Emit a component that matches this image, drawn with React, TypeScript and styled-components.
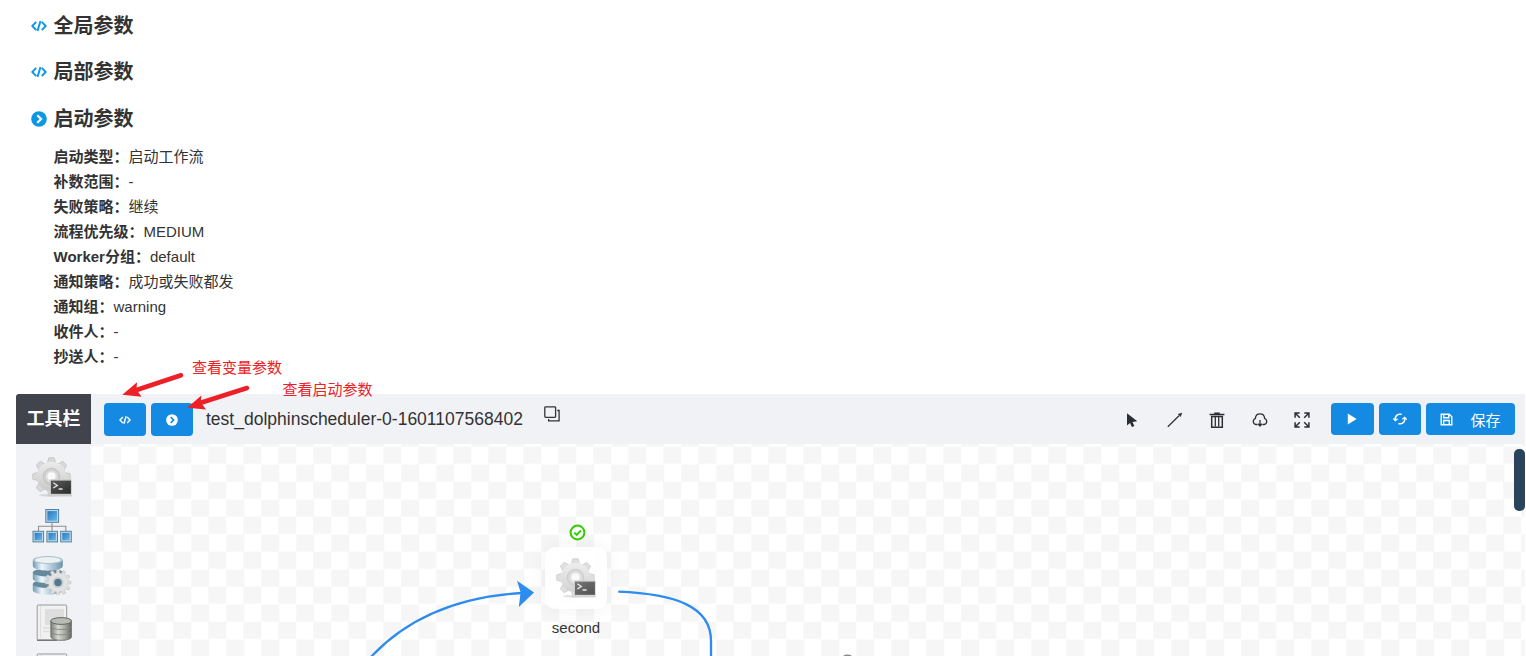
import React from 'react';
import styled, { createGlobalStyle } from 'styled-components';

const GlobalStyle = createGlobalStyle`
  * { box-sizing: border-box; }
  html, body { margin: 0; padding: 0; background: #fff; overflow: hidden; }
  body {
    font-family: "Liberation Sans", Arial, "Noto Sans CJK SC", sans-serif;
    color: #333;
    font-size: 15px;
  }
  svg { display: block; flex: none; }
`;

const Page = styled.div`
  position: relative;
  width: 1526px;
  height: 656px;
  overflow: hidden;
  display: flex;
  flex-direction: column;
`;

const Params = styled.section`
  height: 394px;
  flex: none;
  padding: 11px 0 0 30.5px;
`;

const Heading = styled.h2<{ $gap: number }>`
  display: flex;
  align-items: center;
  gap: 7px;
  height: 30px;
  margin: 0 0 ${(p) => p.$gap}px;
  font-size: 20px;
  line-height: 30px;
  font-weight: 700;
  color: #333;
`;

const ParamList = styled.ul`
  list-style: none;
  margin: 0;
  padding: 0 0 0 23px;
`;

const ParamRow = styled.li`
  height: 25px;
  line-height: 25px;
  white-space: nowrap;
`;

const Dag = styled.section`
  display: flex;
  flex-direction: column;
  width: 1509px;
  height: 262px;
  margin-left: 16px;
`;

const Toolbar = styled.header`
  display: flex;
  height: 50px;
  flex: none;
  background: #f1f2f6;
  border-radius: 3px 0 0 0;
  overflow: hidden;
`;

const ToolTitle = styled.div`
  width: 75px;
  background: #41444d;
  color: #fff;
  font-size: 18px;
  font-weight: 700;
  line-height: 51px;
  text-align: center;
`;

const LeftTools = styled.div`
  display: flex;
  align-items: flex-start;
  gap: 5px;
  padding: 9px 0 0 13px;
`;

const Button = styled.button<{ $w: number; $h?: number }>`
  display: flex;
  align-items: center;
  justify-content: center;
  width: ${(p) => p.$w}px;
  height: ${(p) => p.$h ?? 32}px;
  padding: 0;
  border: 0;
  border-radius: 4px;
  background: #158ae2;
  color: #fff;
  font: inherit;
  gap: 17px;
`;

const ProcessName = styled.span`
  margin-left: 8px;
  font-size: 17.5px;
  line-height: 32px;
`;

const CopyIcon = styled.span`
  margin: 2.5px 0 0 16.5px;
`;

const RightTools = styled.div`
  display: flex;
  align-items: flex-start;
  margin-left: auto;
  padding: 9px 10px 0 0;
  gap: 5px;
`;

const IconStrip = styled.div`
  display: flex;
  margin-right: 2.5px;
`;

const IconSlot = styled.span`
  display: flex;
  align-items: center;
  justify-content: center;
  width: 42.5px;
  height: 34px;
`;

const Body = styled.div`
  display: flex;
  flex: 1;
  min-height: 0;
`;

const Palette = styled.aside`
  display: flex;
  flex-direction: column;
  align-items: center;
  gap: 8.8px;
  width: 75px;
  flex: none;
  padding: 13px 3px 0 0;
  background: #f1f2f6;
  overflow: hidden;
`;

const Canvas = styled.div`
  position: relative;
  flex: 1;
  overflow: hidden;
  background: repeating-conic-gradient(#f6f6f6 0 25%, #fff 0 50%) -4.8px 2.7px / 35px 35px;
`;

const Links = styled.svg`
  position: absolute;
  left: 0;
  top: 0;
`;

const Scrollbar = styled.div`
  position: absolute;
  right: 0;
  top: 5px;
  width: 11px;
  height: 62px;
  border-radius: 5px;
  background: #2a455b;
`;

const Node = styled.div`
  position: absolute;
  left: 454px;
  top: 80px;
  width: 62px;
  display: flex;
  flex-direction: column;
  align-items: center;
`;

const NodeStatus = styled.div`
  padding-left: 2px;
`;

const NodeCard = styled.div`
  display: flex;
  align-items: center;
  justify-content: center;
  width: 62px;
  height: 62px;
  margin-top: 6px;
  border-radius: 10px;
  background: rgba(255, 255, 255, 0.9);
  box-shadow: 0 0 18px rgba(0, 0, 0, 0.06);
`;

const NodeLabel = styled.span`
  margin-top: 9px;
  line-height: 20px;
`;

const NextStatus = styled.div`
  position: absolute;
  left: 748px;
  top: 210px;
`;

const Notes = styled.svg`
  position: absolute;
  left: 0;
  top: 350px;
`;

const Note = styled.span<{ $x: number; $y: number }>`
  position: absolute;
  left: ${(p) => p.$x}px;
  top: ${(p) => p.$y}px;
  line-height: 20px;
  color: #ee2027;
  white-space: nowrap;
`;

const CodeIcon = ({ size, color }: { size: number; color: string }) => (
  <svg width={size} height={size} viewBox="0 0 16 16" fill="none" stroke={color} strokeWidth="1.9">
    <path d="M5.2 3.9 1.3 8l3.9 4.1M10.800 3.900 14.700 8l-3.900 4.100M9.500 3.100 6.500 12.900" />
  </svg>
);

const ChevronCircle = ({ size, bg, fg }: { size: number; bg: string; fg: string }) => (
  <svg width={size} height={size} viewBox="0 0 16 16">
    <circle cx="8" cy="8" r="7.8" fill={bg} />
    <path d="M6.3 4.2 10.1 8l-3.8 3.8" fill="none" stroke={fg} strokeWidth="2.2" />
  </svg>
);

const StatusIcon = ({ color }: { color: string }) => (
  <svg width="17" height="17" viewBox="0 0 17 17" fill="none" stroke={color} strokeWidth="2">
    <circle cx="8.5" cy="8.5" r="6.9" />
    <path d="m5.3 8.6 2.4 2.3 4.2-4.4" />
  </svg>
);

const teeth = [0, 45, 90, 135, 180, 225, 270, 315];

const ShellIcon = ({ id, faded }: { id: string; faded?: boolean }) => (
  <svg width="40" height="40" viewBox="0 0 40 40" opacity={faded ? 0.82 : 1}>
    <defs>
      <linearGradient id={`${id}g`} x1="0" y1="0" x2="0" y2="1">
        <stop offset="0" stopColor="#ebebeb" />
        <stop offset="1" stopColor="#c9c9c9" />
      </linearGradient>
      <linearGradient id={`${id}t`} x1="0" y1="0" x2="1" y2="1">
        <stop offset="0" stopColor="#5a5a5a" />
        <stop offset="1" stopColor="#2a2a2a" />
      </linearGradient>
    </defs>
    <ellipse cx="17" cy="38.3" rx="10" ry="1.4" fill="#c4c4c4" opacity=".6" />
    <g fill="#d9d9d9" stroke="#bdbdbd" strokeWidth=".7">
      {teeth.map((a) => (
        <path key={a} d="M15 7.500 16.800.800h5.400l1.800 6.700z" transform={`rotate(${a} 19.5 19.5)`} />
      ))}
    </g>
    <circle cx="19.5" cy="19.5" r="14.8" fill={`url(#${id}g)`} />
    <circle cx="19.5" cy="19.5" r="8.3" fill="#cfcfcf" stroke="#bdbdbd" strokeWidth=".8" />
    <circle cx="19.5" cy="19.5" r="6" fill="#dedede" />
    <circle cx="19.5" cy="19.3" r="4" fill="#fafafa" />
    <rect x="18" y="22.2" width="21.8" height="17.4" rx=".8" fill="#cdcdcd" />
    <rect x="18.9" y="23.6" width="20" height="13.2" fill={`url(#${id}t)`} />
    <path d="m21.3 25.8 4 2.6-4 2.6M26.6 32h4" fill="none" stroke="#e2e2e2" strokeWidth="1.3" />
  </svg>
);

const SubProcessIcon = () => (
  <svg width="40" height="40" viewBox="0 0 40 40">
    <defs>
      <linearGradient id="blue" x1="0" y1="0" x2="1" y2="1">
        <stop offset="0" stopColor="#2a78b8" />
        <stop offset="1" stopColor="#69b7ec" />
      </linearGradient>
    </defs>
    <path d="M20 17v9M6.5 25v-4.7h27.3V25" fill="none" stroke="#8f8f8f" strokeWidth="1.1" />
    {[
      [13.3, 3, 13.8],
      [0.5, 24.800, 11.600],
      [14.4, 24.800, 11.600],
      [28.2, 24.800, 11.600],
    ].map(([x, y, s]) => (
      <g key={x}>
        <rect x={x + 0.5} y={y + 0.5} width={s - 1} height={s - 1} fill="#b9d8ea" stroke="#55839f" strokeWidth="1" />
        <rect x={x + 2.1} y={y + 2.1} width={s - 4.2} height={s - 4.2} fill="url(#blue)" />
      </g>
    ))}
  </svg>
);

const ProcedureIcon = () => (
  <svg width="40" height="40" viewBox="0 0 40 40">
    <defs>
      <linearGradient id="drum" x1="0" x2="1">
        <stop offset="0" stopColor="#6f9ab2" />
        <stop offset=".3" stopColor="#eef6fa" />
        <stop offset=".65" stopColor="#a9c5d5" />
        <stop offset="1" stopColor="#6c94ab" />
      </linearGradient>
    </defs>
    {[29, 17.500, 5].map((y) => (
      <g key={y}>
        <path d={`M.8 ${y}v6c0 6.200 30 6.200 30 0V${y}z`} fill="url(#drum)" />
        <ellipse cx="15.8" cy={y} rx="15" ry="4" fill={y < 6 ? '#a9c3d1' : '#66889c'} />
      </g>
    ))}
    <ellipse cx="15.8" cy="5" rx="12.800" ry="3" fill="#eef1f2" />
    <g fill="#dcdcdc" stroke="#b5b5b5" strokeWidth=".4">
      {[0, 30, 60, 90, 120, 150, 180, 210, 240, 270, 300, 330].map((a) => (
        <path key={a} d="m23.900 19.500.800-5h2.600l.800 5z" transform={`rotate(${a} 26 27.5)`} />
      ))}
    </g>
    <circle cx="26" cy="27.5" r="9.5" fill="#e3e3e3" />
    <circle cx="26" cy="27.5" r="5.6" fill="#cbcfd1" />
    <circle cx="26" cy="27.5" r="3.7" fill="#54788d" />
  </svg>
);

const SqlIcon = ({ id }: { id: string }) => (
  <svg width="40" height="40" viewBox="0 0 40 40">
    <defs>
      <linearGradient id={id} x1="0" x2="1">
        <stop offset="0" stopColor="#777b74" />
        <stop offset=".35" stopColor="#d8dbd4" />
        <stop offset=".7" stopColor="#a3a69f" />
        <stop offset="1" stopColor="#5f625d" />
      </linearGradient>
    </defs>
    <rect x="5.2" y="2" width="29.500" height="35" rx="1" fill="#f1f1f1" stroke="#999" strokeWidth="1" />
    <path d="M5 37.300h20" stroke="#777" strokeWidth="1.4" />
    <path d="M8.4 3v32" stroke="#dcdcdc" />
    <rect x="13" y="6" width="19" height="16" fill="#dedede" />
    <path d="M11 25h9M11 28.5h7" stroke="#ddd" strokeWidth="1.5" />
    <path d="M18.8 18v15.7c0 4.8 20.8 4.8 20.8 0V18z" fill={`url(#${id})`} stroke="#70736e" strokeWidth=".8" />
    <path d="M18.8 23.5c1 4 19.8 4 20.8 0M18.8 28.8c1 4 19.8 4 20.8 0" fill="none" stroke="#858881" strokeWidth=".9" />
    <ellipse cx="29.2" cy="18" rx="10.4" ry="3.4" fill="#b9bcb5" stroke="#62655f" strokeWidth="1" />
  </svg>
);

const PointerIcon = () => (
  <svg width="16" height="16" viewBox="0 0 16 16" fill="#2b2f33">
    <path d="M3 1.2v12.300l3-2.600 1.900 4.200 2.500-1.200-1.900-4 4.800-.700z" />
  </svg>
);

const LineIcon = () => (
  <svg width="16" height="16" viewBox="0 0 16 16">
    <path d="M.8 14.8 12 3.7" stroke="#2b2f33" strokeWidth="1.2" />
    <path d="m15.200.7-1.500 4.400-2.900-3z" fill="#2b2f33" />
  </svg>
);

const TrashIcon = () => (
  <svg width="16" height="16" viewBox="0 0 16 16" fill="none" stroke="#2b2f33">
    <path d="M.6 2.600h14.8" strokeWidth="1.5" />
    <path d="M5.2 1.300h5.6" strokeWidth="1.4" />
    <path d="M2.7 4.5v10.7h10.6V4.5z" strokeWidth="1.5" />
    <path d="M6.3 5v9.5M9.7 5v9.5" strokeWidth="1.3" />
  </svg>
);

const CloudIcon = () => (
  <svg width="16" height="16" viewBox="0 0 16 16" fill="none" stroke="#2b2f33" strokeWidth="1.3">
    <path d="M5.5 12.500H3.9A3.1 3.1 0 0 1 3.4 6.500C3.5 3.500 5.4 1.900 8 1.900s4.500 1.600 4.600 4.600a3.100 3.100 0 0 1-.5 6h-1.600" />
    <path d="M8 8v6M6 11.800l2 2.200 2-2.200" />
  </svg>
);

const ExpandIcon = () => (
  <svg width="16" height="16" viewBox="0 0 16 16" fill="none" stroke="#2b2f33" strokeWidth="1.5">
    <path d="M1.100 5.700V1.100h4.600M1.300 1.300l4.500 4.500M10.300 1.100h4.600v4.600M14.700 1.300l-4.500 4.500M1.100 10.300v4.600h4.600M1.300 14.700l4.500-4.500M14.900 10.300v4.600h-4.600M14.700 14.700l-4.500-4.500" />
  </svg>
);

const RefreshIcon = () => (
  <svg width="14" height="14" viewBox="0 0 14 14" fill="none" stroke="#fff" strokeWidth="1.5">
    <path d="M8.600 2.200H6.200A4.700 4.700 0 0 0 2.300 8M5.400 11.800h2.400A4.700 4.700 0 0 0 11.700 6" />
    <path d="m.3 6.400 2 2.200 2.300-1.900M13.700 7.600l-2-2.200-2.300 1.900" strokeWidth="1.300" />
  </svg>
);

const SaveIcon = () => (
  <svg width="13" height="13" viewBox="0 0 13 13" fill="none" stroke="#fff" strokeWidth="1.400">
    <path d="M1.200 1.200h8l2.600 2.600v8H1.200z" />
    <path d="M3.700 1.200v3.500h5V1.200M3.700 11.600V7.500h5.600v4.100" />
  </svg>
);

const params: [string, string][] = [
  ['启动类型', '启动工作流'],
  ['补数范围', '-'],
  ['失败策略', '继续'],
  ['流程优先级', 'MEDIUM'],
  ['Worker分组', 'default'],
  ['通知策略', '成功或失败都发'],
  ['通知组', 'warning'],
  ['收件人', '-'],
  ['抄送人', '-'],
];

export default function App() {
  return (
    <Page lang="zh-CN">
      <GlobalStyle />
      <Params>
        <Heading $gap={16}>
          <CodeIcon size={16} color="#0c96e6" />
          全局参数
        </Heading>
        <Heading $gap={17}>
          <CodeIcon size={16} color="#0c96e6" />
          局部参数
        </Heading>
        <Heading $gap={10}>
          <ChevronCircle size={16} bg="#0c96e6" fg="#fff" />
          启动参数
        </Heading>
        <ParamList>
          {params.map(([name, value]) => (
            <ParamRow key={name}>
              <b>{name}：</b>
              {value}
            </ParamRow>
          ))}
        </ParamList>
      </Params>

      <Dag>
        <Toolbar>
          <ToolTitle>工具栏</ToolTitle>
          <LeftTools>
            <Button $w={42} $h={33}><CodeIcon size={12} color="#fff" /></Button>
            <Button $w={42} $h={33}><ChevronCircle size={12} bg="#fff" fg="#158ae2" /></Button>
            <ProcessName>test_dolphinscheduler-0-1601107568402</ProcessName>
            <CopyIcon>
              <svg width="16" height="16" viewBox="0 0 16 16" fill="none" stroke="#333" strokeWidth="1.300">
                <rect x=".8" y=".8" width="10.800" height="10.600" rx=".8" />
                <path d="M13.200 4.500h1.900v10.400H4.600V13" />
              </svg>
            </CopyIcon>
          </LeftTools>
          <RightTools>
            <IconStrip>
              <IconSlot><PointerIcon /></IconSlot>
              <IconSlot><LineIcon /></IconSlot>
              <IconSlot><TrashIcon /></IconSlot>
              <IconSlot><CloudIcon /></IconSlot>
              <IconSlot><ExpandIcon /></IconSlot>
            </IconStrip>
            <Button $w={42.5}>
              <svg width="10" height="12" viewBox="0 0 10 12" fill="#fff"><path d="M.8.600 9.600 6 .8 11.400z" /></svg>
            </Button>
            <Button $w={42.5}><RefreshIcon /></Button>
            <Button $w={89}>
              <SaveIcon />
              保存
            </Button>
          </RightTools>
        </Toolbar>

        <Body>
          <Palette>
            <ShellIcon id="p" />
            <SubProcessIcon />
            <ProcedureIcon />
            <SqlIcon id="s1" />
            <SqlIcon id="s2" />
          </Palette>
          <Canvas>
            <Links width="1434" height="212" viewBox="91 444 1434 212" fill="none" stroke="#2d8cf0" strokeWidth="2.300">
              <path d="M370 658C405 620 455 597 522 593" />
              <path d="M618.300 591.700C675 594 711 606 711 641V658" />
              <path d="m534 592.400-17-11.600 3.600 11.500-1.800 14.700z" fill="#2d8cf0" stroke="none" />
            </Links>
            <Node>
              <NodeStatus><StatusIcon color="#33cc00" /></NodeStatus>
              <NodeCard><ShellIcon id="n" faded /></NodeCard>
              <NodeLabel>second</NodeLabel>
            </Node>
            <NextStatus><StatusIcon color="#888" /></NextStatus>
            <Scrollbar />
          </Canvas>
        </Body>
      </Dag>

      <Notes width="400" height="70" viewBox="0 350 400 70">
        <g stroke="#ee2027" strokeWidth="4.600" strokeLinecap="round">
          <path d="M181 375.300 135 390.500" />
          <path d="M247 388 200 403" />
        </g>
        <g fill="#ee2027">
          <path d="m122.300 394.800 14.700-12.500-.500 7.200 5 7.300z" />
          <path d="m187.300 407.700 14-12.300-.500 7.200 5.200 7z" />
        </g>
      </Notes>
      <Note $x={192} $y={358}>查看变量参数</Note>
      <Note $x={282.5} $y={380}>查看启动参数</Note>
    </Page>
  );
}
